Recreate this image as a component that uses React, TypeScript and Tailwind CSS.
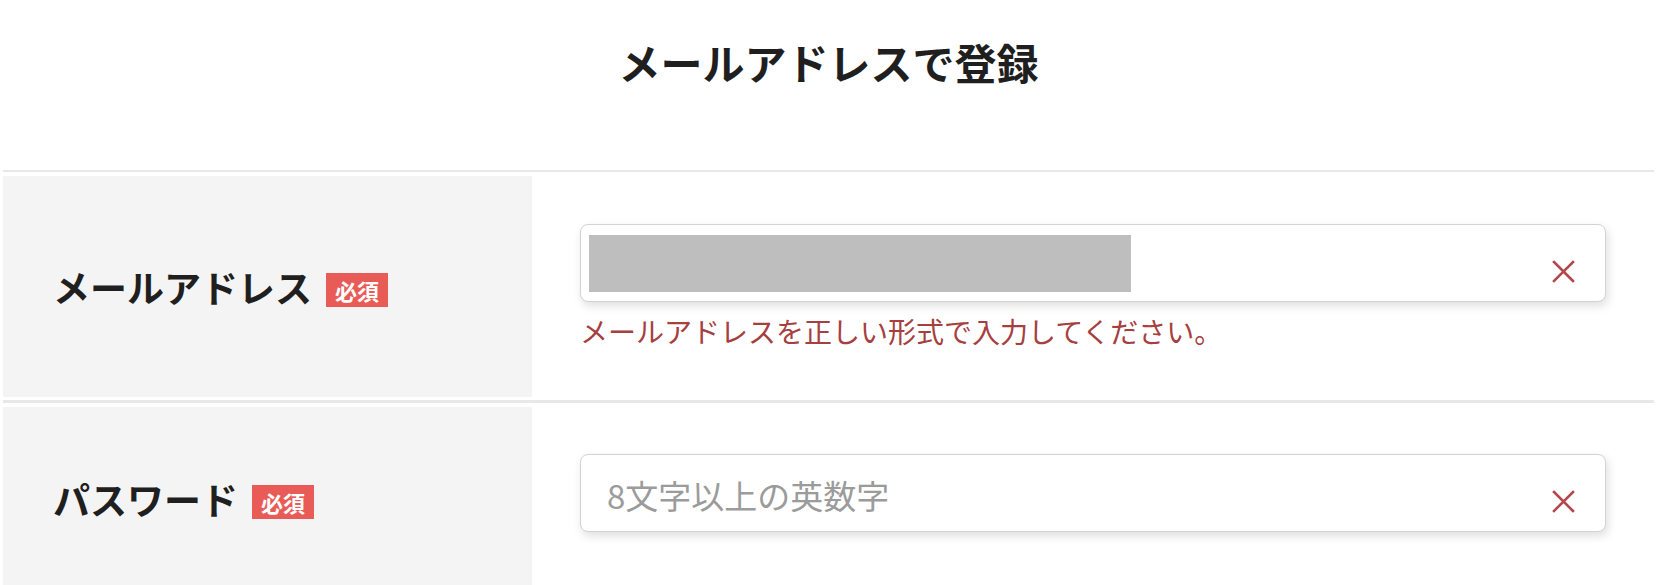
import { useState } from "react";

function Required() {
  return (
    <span className="ml-[14px] mt-[6px] inline-flex h-[34px] items-center bg-[#e95b56] px-[9px] text-[22px] font-bold leading-none text-white">
      必須
    </span>
  );
}

function ClearIcon() {
  return (
    <svg width="23" height="23" viewBox="0 0 23 23" className="absolute right-[30px] top-[35px]">
      <path d="M2 2 L21 21 M21 2 L2 21" stroke="#b4474b" strokeWidth="2.6" strokeLinecap="square" fill="none" />
    </svg>
  );
}

export default function App() {
  const [password, setPassword] = useState("");

  return (
    <div className="h-[585px] w-[1676px] overflow-hidden bg-white font-['Noto_Sans_CJK_JP',sans-serif] text-[#1f1f1f]">
      <div className="ml-[3px] w-[1651px]">
        <div className="flex h-[170px] justify-center pt-[32px]">
          <h1 className="text-[42px] font-bold leading-[60px]">メールアドレスで登録</h1>
        </div>

        {/* email row */}
        <div className="border-t-2 border-[#e8e8e8] pt-[4px] pb-[3px]">
          <div className="flex h-[221px]">
            <div className="flex w-[529px] items-center bg-[#f4f4f4] pl-[50px]">
              <span className="text-[37px] font-bold leading-[50px]">メールアドレス</span>
              <Required />
            </div>
            <div className="flex-1 px-[48px] pt-[48px]">
              <div className="relative h-[78px] rounded-[8px] border border-[#d3d3d3] bg-white pl-[8px] pt-[10px] shadow-[2px_4px_10px_rgba(0,0,0,0.13)]">
                <div className="h-[57px] w-[542px] bg-[#bebebe]" />
                <ClearIcon />
              </div>
              <p className="mt-[8px] text-[28px] leading-[42px] text-[#a5403f]">
                メールアドレスを正しい形式で入力してください。
              </p>
            </div>
          </div>
        </div>

        {/* password row */}
        <div className="border-t-[3px] border-[#e8e8e8] pt-[4px]">
          <div className="flex h-[184px]">
            <div className="flex w-[529px] items-center bg-[#f4f4f4] pl-[50px]">
              <span className="text-[37px] font-bold leading-[50px]">パスワード</span>
              <Required />
            </div>
            <div className="flex-1 px-[48px] pt-[47px]">
              <div className="relative h-[78px] rounded-[8px] border border-[#d3d3d3] bg-white shadow-[2px_4px_10px_rgba(0,0,0,0.13)]">
                <input
                  type="password"
                  value={password}
                  onChange={(e) => setPassword(e.target.value)}
                  placeholder="8文字以上の英数字"
                  className="h-full w-full rounded-[8px] bg-transparent pl-[26px] pr-[80px] pt-[4px] text-[33px] text-[#333] outline-none placeholder:text-[#9b9b9b]"
                />
                <ClearIcon />
              </div>
            </div>
          </div>
        </div>
      </div>
    </div>
  );
}
